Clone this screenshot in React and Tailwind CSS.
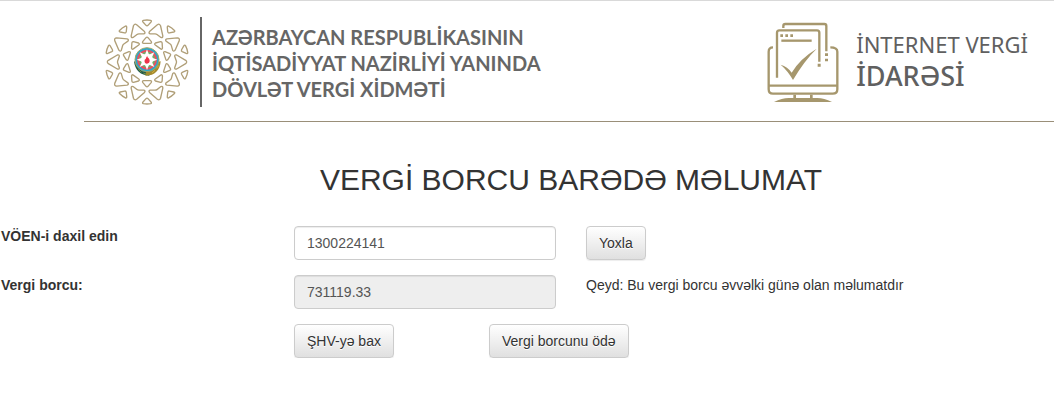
const TURNS = [0, 36, 72, 108, 144, 180, 216, 252, 288, 324];
const STAR = [0, 45, 90, 135, 180, 225, 270, 315];

function Emblem() {
  return (
    <svg className="h-[88px] w-[84px] shrink-0" viewBox="30 30 252 264" aria-hidden="true">
      <g fill="none" stroke="#b09f78" strokeWidth="4" strokeLinejoin="round">
        {TURNS.map((a) => (
          <g key={a} transform={`rotate(${a} 156 162)`}>
            <path d="M145 37 Q156 35 167 37 Q171 38 168 42 L159 52 Q156 55 153 52 L144 42 Q141 38 145 37Z" />
            <path d="M153 89 Q156 86 159 89 L169 101 Q171 106 166 106 L146 106 Q141 106 143 101Z" />
            <path
              transform="rotate(18 156 162)"
              d="M151 46 Q156 40 161 46 L177 73 Q179 79 173 79 L159 74 Q156 73 153 74 L139 79 Q133 79 135 73Z"
            />
          </g>
        ))}
      </g>
      <path d="M117 160 C120 187 137 203 163 203 L163 190 C141 190 129 180 125 163Z" fill="#21594a" />
      <path d="M197 160 C195 188 178 204 151 203 L153 190 C172 191 184 180 189 161Z" fill="#a58a2e" />
      <path d="M122 170 L128 178 M130 183 L139 193 M145 195 L155 199" stroke="#78903d" strokeWidth="3" />
      <path d="M192 172 L184 181 M180 187 L171 195" stroke="#d2b13e" strokeWidth="3" />
      <circle cx="156" cy="155" r="36" fill="#26a9cf" stroke="#a3a466" strokeWidth="3" />
      <circle cx="156" cy="155" r="30" fill="#e65261" />
      <circle cx="156" cy="155" r="24" fill="#70ae68" />
      {STAR.map((a) => (
        <path key={a} transform={`rotate(${a} 156 155)`} d="M156 124 L166 151 L156 158 L146 151Z" fill="#fff" />
      ))}
      <circle cx="156" cy="155" r="18" fill="#fff" />
      <path
        d="M157 143 C156 149 163 149 164 157 C165 163 161 167 156 167 C151 167 147 163 149 156 C150 153 152 155 153 151 C153 148 155 147 157 143Z"
        fill="#ed3549"
      />
    </svg>
  );
}

function MonitorIcon() {
  return (
    <svg className="h-[80px] w-[72px] shrink-0" viewBox="0 0 216 240" fill="none" aria-hidden="true">
      <g stroke="#a6976d" strokeWidth="7">
        <path d="M49 18 V12 Q49 6 55 6 H172 Q178 6 178 12 V88" />
        <path d="M30 167 V32 Q30 25 37 25 H150 Q157 25 157 32 V119" />
        <path d="M43 56 H134" />
        <path d="M18 76 Q5 76 5 89 V202 Q5 215 18 215 H197 Q211 215 211 202 V89 Q211 76 190 76" />
        <path d="M5 191 H211" />
        <path d="M83 218 V230 M133 218 V230" strokeWidth="8" />
      </g>
      <g fill="#a6976d">
        <path d="M40 37h8v8h-8zM55 37h8v8h-8zM70 37h8v8h-8zM152 125h9v9h-9zM174 94h9v8h-9zM174 110h9v8h-9z" />
        <path d="M41 128 Q62 134 74 152 Q99 110 149 80 Q112 116 78 174 Q62 146 41 128Z" />
        <path d="M21 240 Q45 228 65 228 H151 Q171 228 195 240Z" />
      </g>
    </svg>
  );
}

const buttonLook =
  "h-[34px] rounded border border-[#ccc] bg-linear-to-b from-white to-[#e0e0e0] px-3 text-sm text-[#333] shadow-[inset_0_1px_0_rgba(255,255,255,.15),0_1px_1px_rgba(0,0,0,.075)] text-shadow-[0_1px_0_#fff]";
const inputLook =
  "h-[34px] w-full rounded border border-[#ccc] px-3 text-sm text-[#555] shadow-[inset_0_1px_1px_rgba(0,0,0,.075)]";
const rowLook = "grid grid-cols-[293fr_292fr_468fr] items-start";

export default function App() {
  return (
    <div className="border-t border-[#d9d9d9] bg-white font-['Liberation_Sans',Arial,sans-serif] text-sm leading-5 text-[#333]">
      <header className="ml-[84px] flex items-start justify-between border-b border-[#9a8f79] pt-4 pr-[26px] pb-3.5 pl-[21px]">
        <div className="flex h-[90px] items-center">
          <Emblem />
          <div className="ml-[11px] h-full w-0.5 shrink-0 bg-[#666]" />
          <p className="ml-2.5 pt-0.5 font-['Lato','Noto_Sans',sans-serif] text-[20px] leading-[26px] font-bold whitespace-nowrap text-[#666]">
            AZƏRBAYCAN RESPUBLİKASININ
            <br />
            İQTİSADİYYAT NAZİRLİYİ YANINDA
            <br />
            DÖVLƏT VERGİ XİDMƏTİ
          </p>
        </div>
        <div className="flex items-start gap-[17px] pt-[5px]">
          <MonitorIcon />
          <p className="pt-1.5 font-['Noto_Sans',sans-serif] whitespace-nowrap text-[#606060]">
            <span className="block text-[22px] leading-8">İNTERNET VERGİ</span>
            <span className="block text-[27px] leading-8 font-medium">İDARƏSİ</span>
          </p>
        </div>
      </header>

      <main>
        <h1 className="mt-10 mb-7 pl-[88px] text-center text-[30px] leading-9">VERGİ BORCU BARƏDƏ MƏLUMAT</h1>
        <form className="flex flex-col gap-[15px] pl-px" onSubmit={(e) => e.preventDefault()}>
          <div className={rowLook}>
            <label htmlFor="voen" className="font-bold">
              VÖEN-i daxil edin
            </label>
            <div className="pr-[30px]">
              <input id="voen" type="text" defaultValue="1300224141" className={`${inputLook} bg-white`} />
            </div>
            <div>
              <button type="submit" className={buttonLook}>
                Yoxla
              </button>
            </div>
          </div>
          <div className={rowLook}>
            <label htmlFor="borc" className="font-bold">
              Vergi borcu:
            </label>
            <div className="pr-[30px]">
              <input id="borc" type="text" readOnly value="731119.33" className={`${inputLook} bg-[#eee]`} />
            </div>
            <p>Qeyd: Bu vergi borcu əvvəlki günə olan məlumatdır</p>
          </div>
          <div className={rowLook}>
            <div className="col-span-2 col-start-2 flex">
              <div className="w-[195px]">
                <button type="button" className={buttonLook}>
                  ŞHV-yə bax
                </button>
              </div>
              <button type="button" className={buttonLook}>
                Vergi borcunu ödə
              </button>
            </div>
          </div>
        </form>
      </main>
    </div>
  );
}
